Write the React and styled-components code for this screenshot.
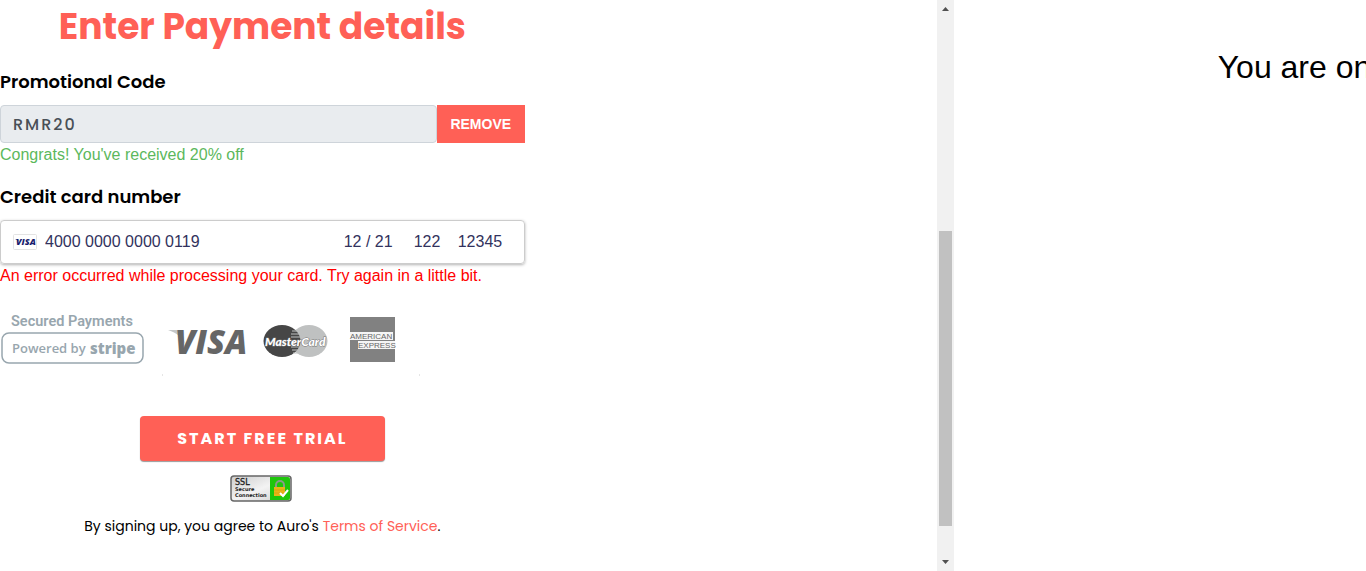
import React from "react";
import styled, { createGlobalStyle } from "styled-components";

const coral = "#ff6056";
const arial = '"Liberation Sans", Arial, sans-serif';
const poppins = 'Poppins, Inter, "Open Sans", sans-serif';

const GlobalStyle = createGlobalStyle`
  *, *::before, *::after { box-sizing: border-box; }
  body {
    margin: 0;
    background: #fff;
    color: #000;
    font: 16px/24px ${arial};
    overflow-x: hidden;
  }
`;

const Page = styled.div`
  display: grid;
  grid-template-columns: minmax(0, 937fr) 17px minmax(0, 412fr);
  min-height: 100vh;
`;

const Form = styled.form`
  width: 56%;
  display: flex;
  flex-direction: column;
`;

const Title = styled.h1`
  margin: 0;
  padding: 3px 0 1px;
  color: ${coral};
  font: 700 36px/48px ${poppins};
  text-align: center;
  white-space: nowrap;
`;

const Label = styled.label`
  margin-top: 16px;
  padding-bottom: 9px;
  font: 600 18px/28px ${poppins};
`;

const PromoRow = styled.div`
  display: flex;
  height: 38px;
`;

const PromoInput = styled.input`
  flex: 1;
  min-width: 0;
  padding: 0 12px;
  border: 1px solid #ced4da;
  border-radius: 4px;
  background: #e9ecef;
  color: #495057;
  font: 500 16px ${poppins};
  letter-spacing: 2px;
`;

const RemoveButton = styled.button`
  width: 88px;
  padding: 0;
  border: 0;
  background: ${coral};
  color: #fff;
  font: 700 14px ${arial};
  cursor: pointer;
`;

const Message = styled.p`
  margin: 0;
  color: ${(p) => p.$color};
`;

const CardBox = styled.div`
  display: flex;
  align-items: center;
  height: 44px;
  padding: 0 12px;
  border: 1px solid #ccc;
  border-radius: 4px;
  box-shadow: 0 1px 3px rgba(0, 0, 0, 0.3);
`;

const CardInput = styled.input`
  flex: ${(p) => (p.$width ? "none" : 1)};
  width: ${(p) => (p.$width ? `${p.$width}px` : "auto")};
  min-width: 0;
  padding: 0;
  border: 0;
  background: none;
  color: #32325d;
  font: 16px ${arial};
`;

const VisaChip = styled.svg`
  flex: none;
  margin-right: 8px;
`;

const Brands = styled.div`
  margin-top: 12px;
  height: 80px;
`;

const SubmitButton = styled.button`
  align-self: center;
  width: 245px;
  height: 45px;
  margin-top: 36px;
  padding: 0;
  border: 0;
  border-radius: 4px;
  background: ${coral};
  box-shadow: 0 1px 1px rgba(0, 0, 0, 0.4);
  color: #fff;
  font: 700 16px ${poppins};
  letter-spacing: 2px;
  cursor: pointer;
`;

const Seal = styled.svg`
  align-self: center;
  margin-top: 12px;
`;

const Terms = styled.p`
  margin: 12px 0 0;
  font: 400 14px/24px ${poppins};
  text-align: center;
`;

const TermsLink = styled.a`
  color: ${coral};
  text-decoration: none;
`;

const Track = styled.div`
  display: flex;
  flex-direction: column;
  align-items: center;
  background: #f1f1f1;
`;

const Arrow = styled.svg`
  flex: none;
`;

const Gap = styled.div`
  flex: ${(p) => p.$grow};
`;

const Thumb = styled.div`
  flex: 295;
  width: 13px;
  background: #c1c1c1;
`;

const Aside = styled.aside`
  overflow: hidden;
  padding: 48px 0 0 64%;
  font-size: 32px;
  line-height: 38px;
  white-space: nowrap;
`;

function BrandLogos() {
  return (
    <svg width="430" height="78" viewBox="0 0 430 78" role="img" aria-label="Secured payments, powered by Stripe">
      <g fill="#98a6ae">
        <text x="11" y="26" fontFamily="Roboto" fontWeight="600" fontSize="14.5">Secured Payments</text>
        <rect x="2" y="33" width="141" height="30" rx="7" fill="none" stroke="#98a6ae" strokeWidth="1.5" />
        <text x="12" y="53" fontFamily="Open Sans" fontWeight="600" fontSize="13">Powered by</text>
        <text x="90" y="54" fontFamily="Open Sans" fontWeight="800" fontSize="15">stripe</text>
      </g>
      <path d="M168 30h13l4 14C182 37 177 33 168 30Z" fill="#c5c7c8" />
      <text x="175" y="54" fontFamily="Open Sans" fontWeight="800" fontStyle="italic" fontSize="33" fill="#666">VISA</text>
      <ellipse cx="309" cy="41" rx="18.5" ry="16" fill="#bfc1c1" />
      <ellipse cx="282" cy="41" rx="18.5" ry="16" fill="#464646" />
      <path d="M292 31h7M291 34h9M291 37h9M291 47h9M292 50h7M293 53h5" stroke="#bfc1c1" strokeWidth="1" />
      <text x="265" y="46" fontFamily="Lato" fontWeight="900" fontStyle="italic" fontSize="12" fill="#fff" stroke="#777" strokeWidth="1" paintOrder="stroke">MasterCard</text>
      <rect x="350" y="17" width="45" height="45" fill="#818181" />
      <rect x="350" y="32" width="43" height="8" fill="#f5f5f5" />
      <rect x="358" y="41" width="37" height="8" fill="#f5f5f5" />
      <g fontFamily="Liberation Sans" fontSize="8" fill="#666">
        <text x="350" y="39">AMERICAN</text>
        <text x="358" y="48">EXPRESS</text>
      </g>
      <path d="M162 75h1M419 75h1" stroke="#ccc" />
    </svg>
  );
}

export default function App() {
  return (
    <>
      <GlobalStyle />
      <Page>
        <main>
          <Form onSubmit={(e) => e.preventDefault()}>
            <Title>Enter Payment details</Title>
            <Label htmlFor="promo">Promotional Code</Label>
            <PromoRow>
              <PromoInput id="promo" defaultValue="RMR20" readOnly />
              <RemoveButton type="button">REMOVE</RemoveButton>
            </PromoRow>
            <Message $color="#5cb85c">Congrats! You've received 20% off</Message>
            <Label htmlFor="card">Credit card number</Label>
            <CardBox>
              <VisaChip width="24" height="16" viewBox="0 0 24 16" aria-hidden="true">
                <rect x="0.5" y="0.5" width="23" height="15" rx="1" fill="#fff" stroke="#e3e3e3" />
                <text x="3" y="11" fontFamily="Open Sans" fontWeight="800" fontStyle="italic" fontSize="9" fill="#191e6e">VISA</text>
                <path d="M2 5h3l1 3C5 6 4 6 2 5Z" fill="#191e6e" />
              </VisaChip>
              <CardInput id="card" defaultValue="4000 0000 0000 0119" />
              <CardInput $width={70} aria-label="Expiry date" defaultValue="12 / 21" />
              <CardInput $width={44} aria-label="Security code" defaultValue="122" />
              <CardInput $width={54} aria-label="ZIP code" defaultValue="12345" />
            </CardBox>
            <Message $color="#f00">An error occurred while processing your card. Try again in a little bit.</Message>
            <Brands>
              <BrandLogos />
            </Brands>
            <SubmitButton type="submit">START FREE TRIAL</SubmitButton>
            <Seal width="64" height="29" viewBox="0 0 64 29" role="img" aria-label="SSL secure connection">
              <defs>
                <linearGradient id="silver" x2="1" y2="1">
                  <stop stopColor="#ccc" />
                  <stop offset="0.5" stopColor="#f3f3f3" />
                  <stop offset="1" stopColor="#ccc" />
                </linearGradient>
              </defs>
              <rect x="1" y="3" width="60" height="25" rx="3" fill="url(#silver)" stroke="#666" strokeWidth="1.5" />
              <path d="M40 4h18q2 0 2 2v19q0 2-2 2H40Z" fill="#1fc60b" />
              <g fontFamily="DejaVu Sans" fontWeight="700" fill="#222">
                <text x="5" y="12" fontSize="8" fontWeight="400" stroke="#222" strokeWidth="0.3">SSL</text>
                <text x="5" y="18" fontSize="5">Secure</text>
                <text x="5" y="24" fontSize="5">Connection</text>
              </g>
              <path d="M46 15v-3a4 4 0 0 1 8 0v3" fill="none" stroke="#8a9a8a" strokeWidth="2" />
              <rect x="44" y="14" width="11" height="9" fill="#eab515" />
              <path d="M44 17h11M44 20h11" stroke="#d9a412" />
              <path d="M50 20l3 3 5-6" fill="none" stroke="#fff" strokeWidth="2" />
            </Seal>
            <Terms>
              By signing up, you agree to Auro's <TermsLink href="#terms">Terms of Service</TermsLink>.
            </Terms>
          </Form>
        </main>
        <Track aria-hidden="true">
          <Arrow width="17" height="17" viewBox="0 0 17 17">
            <path d="M5 11h7L8.5 7Z" fill="#505050" />
          </Arrow>
          <Gap $grow={214} />
          <Thumb />
          <Gap $grow={28} />
          <Arrow width="17" height="17" viewBox="0 0 17 17">
            <path d="M5 6h7L8.5 10Z" fill="#505050" />
          </Arrow>
        </Track>
        <Aside>You are on</Aside>
      </Page>
    </>
  );
}
